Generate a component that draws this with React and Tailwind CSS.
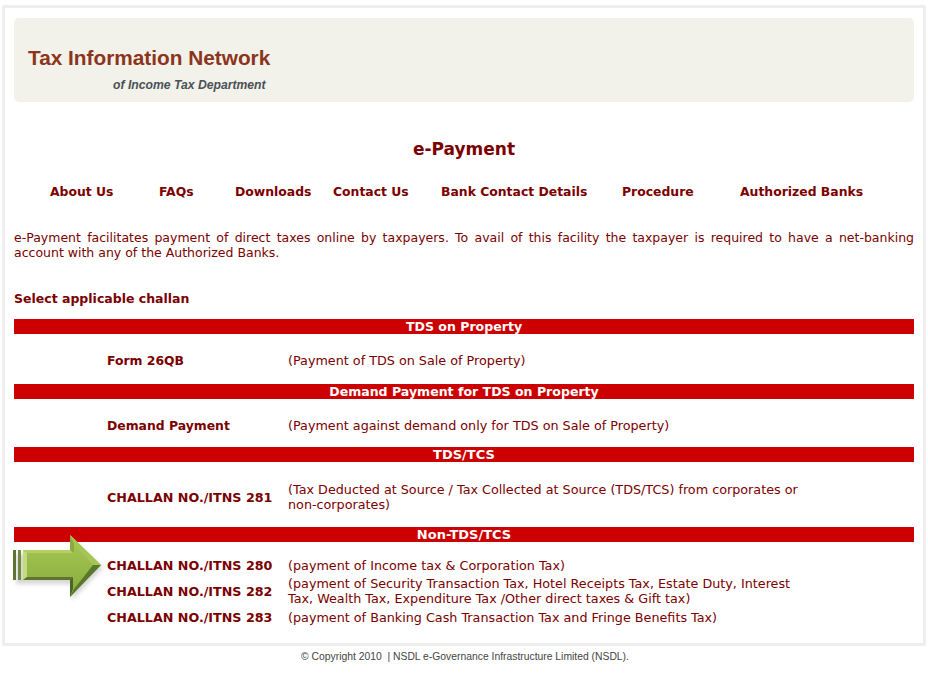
import React from 'react'

const verdana = "font-['DejaVu_Sans','Verdana',sans-serif]"

const navLinks = [
  { label: 'About Us', className: 'ml-[36px] w-[109px]' },
  { label: 'FAQs', className: 'w-[76px]' },
  { label: 'Downloads', className: 'w-[98px]' },
  { label: 'Contact Us', className: 'w-[108px]' },
  { label: 'Bank Contact Details', className: 'w-[181px]' },
  { label: 'Procedure', className: 'w-[118px]' },
  { label: 'Authorized Banks', className: '' }
]

const sections = [
  {
    title: 'TDS on Property',
    titleClass: 'text-[12.55px]',
    className: 'pt-[19px] pb-[16px]',
    rows: [{ name: 'Form 26QB', nameClass: 'text-[12.4px]', text: '(Payment of TDS on Sale of Property)' }]
  },
  {
    title: 'Demand Payment for TDS on Property',
    titleClass: 'text-[12.55px]',
    className: 'pt-[19px] pb-[14px]',
    rows: [{ name: 'Demand Payment', nameClass: 'text-[12.4px]', text: '(Payment against demand only for TDS on Sale of Property)' }]
  },
  {
    title: 'TDS/TCS',
    titleClass: 'text-[13px]',
    className: 'pt-[20px] pb-[15px]',
    rows: [
      {
        name: 'CHALLAN NO./ITNS 281',
        nameClass: 'text-[12.7px]',
        text: '(Tax Deducted at Source / Tax Collected at Source (TDS/TCS) from corporates or non-corporates)'
      }
    ]
  },
  {
    title: 'Non-TDS/TCS',
    titleClass: 'text-[13px]',
    className: 'pt-[16px]',
    rows: [
      { name: 'CHALLAN NO./ITNS 280', nameClass: 'text-[12.7px]', text: '(payment of Income tax & Corporation Tax)' },
      {
        name: 'CHALLAN NO./ITNS 282',
        nameClass: 'text-[12.7px]',
        rowClass: 'mt-[3px]',
        text: '(payment of Security Transaction Tax, Hotel Receipts Tax, Estate Duty, Interest Tax, Wealth Tax, Expenditure Tax /Other direct taxes & Gift tax)'
      },
      { name: 'CHALLAN NO./ITNS 283', nameClass: 'text-[12.7px]', rowClass: 'mt-[4px]', text: '(payment of Banking Cash Transaction Tax and Fringe Benefits Tax)' }
    ]
  }
]

const Arrow = () => (
  <svg className="absolute left-[10px] top-[532px]" width="100" height="72" viewBox="0 0 100 72">
    <defs>
      <linearGradient id="face" x1="0" y1="0" x2="0" y2="1">
        <stop offset="0" stopColor="#a9c957" />
        <stop offset="1" stopColor="#86ab3c" />
      </linearGradient>
      <filter id="soft" x="-20%" y="-20%" width="140%" height="140%">
        <feGaussianBlur stdDeviation="2" />
      </filter>
    </defs>
    <path d="M6 22H62V6L93 36 62 68V52H6Z" fill="#888" opacity="0.35" filter="url(#soft)" />
    <rect x="3" y="18" width="3" height="30" fill="#5f7434" />
    <rect x="8" y="18" width="3" height="30" fill="#6f8a3c" />
    <path d="M13 18H60V3L91 33 60 65V48H13Z" fill="url(#face)" />
    <path d="M13 18H60L63 21H17Z" fill="#b4d062" />
    <path d="M13 18L17 21V45L13 48Z" fill="#c4dc7c" />
    <path d="M13 48L17 45H63L60 48Z" fill="#5f7430" />
    <path d="M60 48L63 45V57L60 65Z" fill="#4f6429" />
    <path d="M60 3L64 12 83 33H91Z" fill="#a6c558" />
    <path d="M91 33H83L64 57 60 65Z" fill="#5a782d" />
    <path d="M60 3L64 12V21L60 18Z" fill="#8aaa42" />
  </svg>
)

const App = () => {
  return (
    <div className={`relative w-[928px] h-[678px] bg-white pt-[5px] pl-[2px] ${verdana}`}>
      <div className="w-[924px] h-[641px] bg-white border-[3px] border-[#eeeeee] rounded-[2px] pt-[10px] pl-[9px]">
        <div className="w-[900px] h-[84px] bg-[#f3f2ea] rounded-[5px] pt-[27px] pl-[14px] font-['Liberation_Sans',sans-serif]">
          <h1 className="text-[20.8px] leading-[25px] font-bold text-[#8b3520]">Tax Information Network</h1>
          <p className="mt-[8px] ml-[85px] text-[12.2px] leading-[14px] font-bold italic text-[#4a5058]">of Income Tax Department</p>
        </div>

        <div className="w-[900px] text-[#7b0000]">
          <h2 className="mt-[36px] text-center text-[17px] leading-[22px] font-bold">e-Payment</h2>

          <nav className="mt-[24px] flex text-[12.4px] leading-[16px] font-bold">
            {navLinks.map(link => (
              <span key={link.label} className={link.className}>{link.label}</span>
            ))}
          </nav>

          <p className="mt-[30px] text-[12.5px] leading-[15px] text-justify">
            e-Payment facilitates payment of direct taxes online by taxpayers. To avail of this facility the taxpayer is required to have a net-banking account with any of the Authorized Banks.
          </p>

          <p className="mt-[31px] text-[12.5px] leading-[16px] font-bold">Select applicable challan</p>

          <div className="mt-[12px]">
            {sections.map(section => (
              <section key={section.title}>
                <div className={`h-[15px] bg-[#cc0000] text-center leading-[15px] font-bold text-white ${section.titleClass}`}>{section.title}</div>
                <div className={section.className}>
                  {section.rows.map(row => (
                    <div key={row.name} className={`flex items-center pl-[93px] ${row.rowClass || ''}`}>
                      <span className={`w-[181px] shrink-0 leading-[15px] font-bold ${row.nameClass}`}>{row.name}</span>
                      <span className="w-[520px] text-[12.75px] leading-[15px]">{row.text}</span>
                    </div>
                  ))}
                </div>
              </section>
            ))}
          </div>
        </div>
      </div>

      <p className="mt-[5px] text-center text-[10.35px] leading-[12px] text-[#444444] font-['Liberation_Sans',sans-serif]">
        © Copyright 2010 &nbsp;| NSDL e-Governance Infrastructure Limited (NSDL).
      </p>

      <Arrow />
    </div>
  )
}

export default App
